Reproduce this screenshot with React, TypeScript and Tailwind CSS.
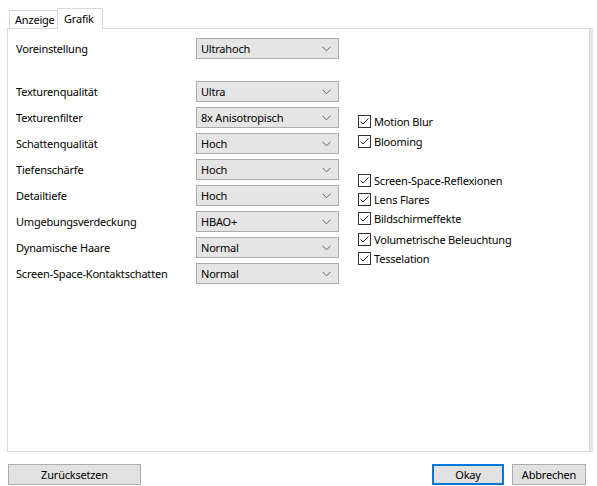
const settings: [string, string][] = [
  ['Texturenqualität', 'Ultra'],
  ['Texturenfilter', '8x Anisotropisch'],
  ['Schattenqualität', 'Hoch'],
  ['Tiefenschärfe', 'Hoch'],
  ['Detailtiefe', 'Hoch'],
  ['Umgebungsverdeckung', 'HBAO+'],
  ['Dynamische Haare', 'Normal'],
  ['Screen-Space-Kontaktschatten', 'Normal'],
]

function Select({ value }: { value: string }) {
  return (
    <div className="flex h-[21px] w-[143px] items-center border border-[#acacac] bg-[#e5e5e5] pl-[4px] pr-[4px]">
      <span className="flex-1">{value}</span>
      <svg width="9" height="6" viewBox="0 0 9 6" className="mr-[3px]">
        <path d="M0.5 0.8 L4.5 4.8 L8.5 0.8" fill="none" stroke="#606060" strokeWidth="1" />
      </svg>
    </div>
  )
}

function Row({ label, value }: { label: string; value: string }) {
  return (
    <div className="flex h-[21px] items-center">
      <span className="w-[180px]">{label}</span>
      <Select value={value} />
    </div>
  )
}

function Check({ label, className = '' }: { label: string; className?: string }) {
  return (
    <div className={`flex items-center ${className}`}>
      <div className="flex h-[13px] w-[13px] items-center justify-center border border-[#333333] bg-white">
        <svg width="11" height="11" viewBox="0 0 11 11">
          <path d="M1.5 5.5 L4 8 L9.5 2.5" fill="none" stroke="#222222" strokeWidth="1" />
        </svg>
      </div>
      <span className="ml-[3px]">{label}</span>
    </div>
  )
}

function Button({ label, width, primary }: { label: string; width: string; primary?: boolean }) {
  return (
    <div
      className={`flex h-[21px] items-center justify-center bg-[#e1e1e1] ${width} ${
        primary ? 'border-2 border-[#0078d7]' : 'border border-[#adadad]'
      }`}
    >
      {label}
    </div>
  )
}

export default function App() {
  return (
    <div
      className="h-[486px] w-[597px] overflow-hidden bg-white text-[11px] leading-none tracking-[-0.2px] text-black"
      style={{ fontFamily: '"Noto Sans", sans-serif' }}
    >
      {/* tab strip */}
      <div className="flex h-[29px] items-end pl-[9px]">
        <div className="flex h-[19px] w-[48px] items-center border border-r-0 border-[#d9d9d9] bg-white pl-[5px]">
          Anzeige
        </div>
        <div className="relative z-10 flex h-[21px] w-[46px] items-start border border-b-0 border-[#d9d9d9] bg-white pl-[6px] pt-[4px]">
          Grafik
        </div>
      </div>

      {/* tab page */}
      <div className="-mt-px ml-[7px] h-[424px] w-[583px] border border-[#d9d9d9] bg-white pl-[8px] pt-[9px] shadow-[3px_0_0_#e6e6e6]">
        <div className="flex">
          <div className="flex flex-col">
            <Row label="Voreinstellung" value="Ultrahoch" />
            <div className="mt-[22px] flex flex-col gap-[5px]">
              {settings.map(([label, value]) => (
                <Row key={label} label={label} value={value} />
              ))}
            </div>
          </div>

          <div className="ml-[19px] mt-[73px] flex flex-col">
            <Check label="Motion Blur" className="h-[20px]" />
            <Check label="Blooming" className="h-[20px]" />
            <Check label="Screen-Space-Reflexionen" className="mt-[20px] h-[19px]" />
            <Check label="Lens Flares" className="h-[19px]" />
            <Check label="Bildschirmeffekte" className="h-[19px]" />
            <Check label="Volumetrische Beleuchtung" className="mt-[2px] h-[19px]" />
            <Check label="Tesselation" className="h-[19px]" />
          </div>
        </div>
      </div>

      {/* dialog buttons */}
      <div className="mt-[12px] flex pl-[8px] pr-[11px]">
        <Button label="Zurücksetzen" width="w-[133px]" />
        <div className="ml-auto flex gap-[8px]">
          <Button label="Okay" width="w-[72px]" primary />
          <Button label="Abbrechen" width="w-[74px]" />
        </div>
      </div>
    </div>
  )
}
